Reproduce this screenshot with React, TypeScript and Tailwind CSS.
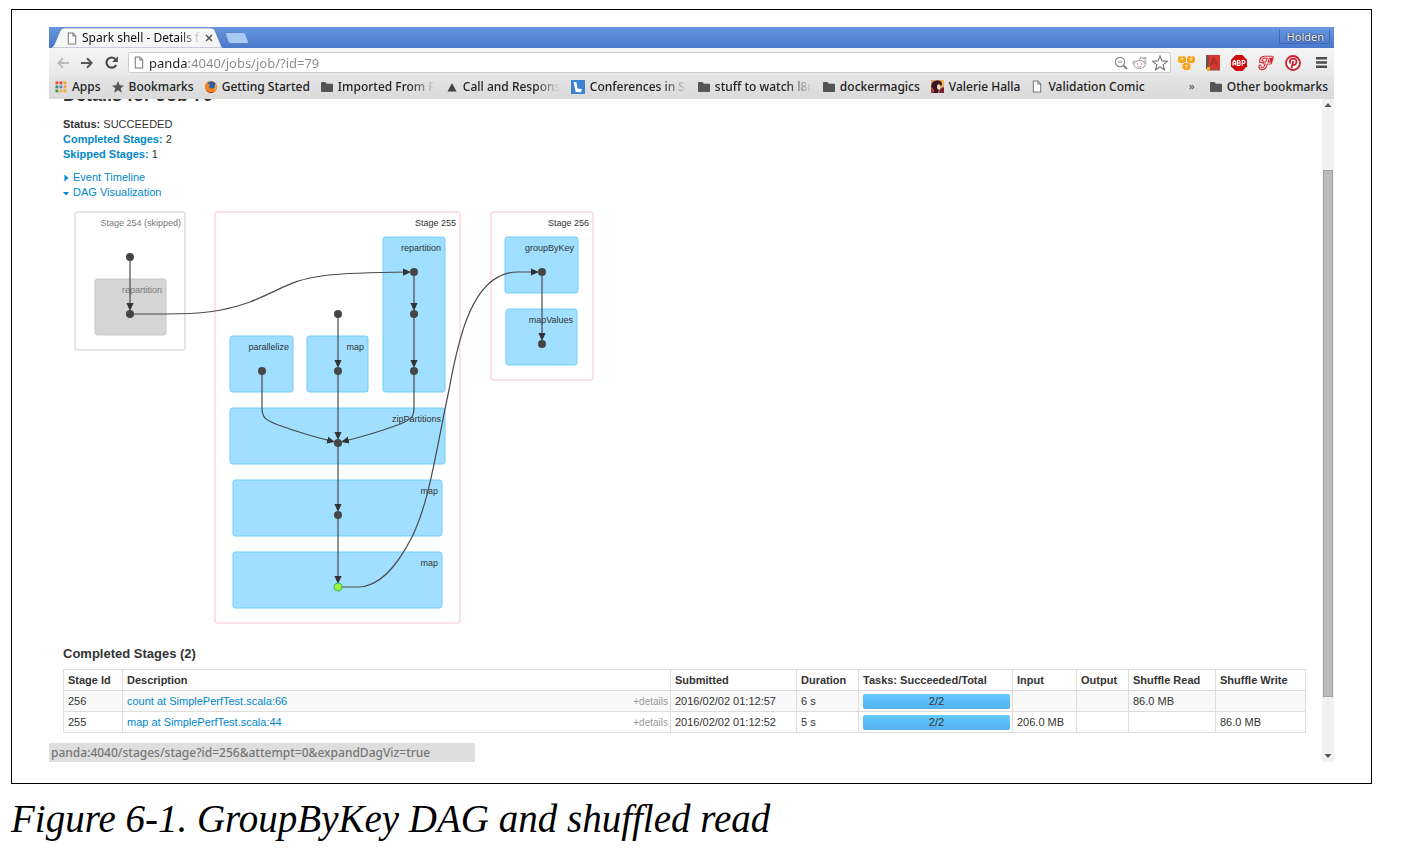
import type { ReactNode } from "react";

const UI = "font-['Noto_Sans',sans-serif]";

function PageIcon() {
  return (
    <svg viewBox="0 0 12 14" className="h-[13px] w-3 shrink-0" fill="#fff" stroke="#777" strokeWidth="1.1">
      <path d="M2 1h5l3 3.4V13H2z" />
      <path d="M7 1v3.4h3" fill="none" />
    </svg>
  );
}

function FolderIcon() {
  return (
    <svg viewBox="0 0 12 12" className="size-3 shrink-0" fill="#555">
      <path d="M0 1.8Q0 1 .8 1h3.600l1.400 1.800h5.400q.8 0 .8.8V10q0 .9-.8.9H.8Q0 10.900 0 10z" />
    </svg>
  );
}

function AppsIcon() {
  const colors = ["#e8452f", "#e8452f", "#f0a030", "#3c9a4e", "#4a86e8", "#f0a030", "#3c9a4e", "#f0b030", "#f0b030"];
  return (
    <svg viewBox="0 0 12 12" className="size-3 shrink-0">
      {colors.map((c, i) => (
        <rect key={i} x={(i % 3) * 4 + 0.5} y={Math.floor(i / 3) * 4 + 0.5} width="2.8" height="2.8" fill={c} />
      ))}
    </svg>
  );
}

function StarIcon() {
  return (
    <svg viewBox="0 0 12 12" className="size-3 shrink-0" fill="#555">
      <path d="M6 0l1.700 4.200 4.300.3-3.300 2.800 1.100 4.400L6 9.300l-3.800 2.400 1.100-4.400L0 4.500l4.300-.3z" />
    </svg>
  );
}

function FirefoxIcon() {
  return (
    <svg viewBox="0 0 12 12" className="size-3 shrink-0">
      <circle cx="6" cy="6" r="5.900" fill="#e0701c" />
      <circle cx="6.600" cy="4.600" r="4" fill="#2b5fa8" />
      <path d="M.3 4C1 2 2 1.600 2.600 1.700 2.400 3 4 3.200 5 3.500c.6.500-.8 1.300-1 2C4.500 8 7 8 8.500 7c1.600-1 2-3 1.500-5 2.500 2.500 2.600 6 0 8.400C7 12.800 2 12 .6 8.500.1 7 .1 5.500.3 4z" fill="#ee8424" />
      <path d="M9.800 2.200c1.900 2 2.100 5 .6 7-.2-1.500.6-4.500-.6-7z" fill="#f8c83c" />
      <path d="M1 8.500c2 2.800 6 3.300 8.500 1.700C7.500 13 2.500 12.500 1 8.500z" fill="#c0301c" />
    </svg>
  );
}

function TriangleIcon() {
  return (
    <svg viewBox="0 0 12 12" className="size-3 shrink-0" fill="#444">
      <path d="M6 2l4.500 8.500h-9z" />
    </svg>
  );
}

function LanyrdIcon() {
  return (
    <svg viewBox="0 0 14 14" className="size-[14px] shrink-0">
      <rect width="14" height="14" fill="#3b82d0" />
      <path d="M2.500 2l3 .3.900 6.200L11 9l-1 3.200-5.300-.3z" fill="#fff" />
    </svg>
  );
}

function PortraitIcon() {
  return (
    <svg viewBox="0 0 13 13" className="size-[13px] shrink-0">
      <rect width="13" height="13" fill="#d9a06a" />
      <path d="M1 3Q3 0 7 .5q4 .5 4 4L9.500 6 8 4 6.500 5 6 8l2 2-1 3H2L3 10 0 7z" fill="#3a1420" />
      <path d="M6.500 5L8 4l1.500 2L9 9l-2 .5-1-2z" fill="#f6d9c4" />
      <path d="M9 9l4-2v6H8z" fill="#7a2030" />
      <path d="M0 8l2.500 2L2 13H0z" fill="#a83a2c" />
      <path d="M11 0h2v5l-1.500 1z" fill="#f3c552" />
    </svg>
  );
}

function Bookmark({ icon, label, faded }: { icon: ReactNode; label: string; faded?: boolean }) {
  return (
    <a href="#" className="flex shrink-0 items-center gap-[5px]">
      {icon}
      <span
        className={
          faded
            ? "w-[97px] overflow-hidden whitespace-nowrap [mask-image:linear-gradient(to_right,#000_74%,transparent)]"
            : "whitespace-nowrap"
        }
      >
        {label}
      </span>
    </a>
  );
}

function TabStrip() {
  return (
    <div className="flex h-[21px] items-end justify-between bg-linear-to-b from-[#6797df] to-[#4a78cc]">
      <div className="flex items-end gap-px">
        <div className="relative flex h-[20px] w-[174px] items-center pr-[10px] pl-[17px]">
          <svg viewBox="0 0 174 20" preserveAspectRatio="none" className="absolute inset-0 size-full">
            <path d="M0 20Q4 20 5.500 16L11 3Q12.500 0 15 0H162Q165 0 166 2.500L171.500 16Q173 20 174 20z" fill="#f6f6f6" stroke="#35568f" strokeWidth=".5" />
          </svg>
          <div className="relative flex w-full items-center gap-1">
            <PageIcon />
            <span className="w-[119px] shrink-0 overflow-hidden text-xs leading-4 whitespace-nowrap text-[#111] [mask-image:linear-gradient(to_right,#000_82%,transparent)]">
              Spark shell - Details for Job 79
            </span>
            <button aria-label="Close tab" className="flex shrink-0 items-center">
              <svg viewBox="0 0 8 8" className="size-2" stroke="#555" strokeWidth="1.500">
                <path d="M1 1l6 6M7 1L1 7" />
              </svg>
            </button>
          </div>
        </div>
        <button aria-label="New tab" className="mb-[4px]">
          <svg viewBox="0 0 26 12" className="h-3 w-[26px]">
            <path d="M1 .5H19Q21 .5 21.800 2.500L25 11.500H7Q4.800 11.500 4 9.500z" fill="#a9c9f5" stroke="#4570b8" strokeWidth=".6" />
          </svg>
        </button>
      </div>
      <button className={`${UI} mr-1 mb-1 h-[15px] rounded-xs border border-[#3f68b0] border-t-[#6d98dc] pr-[5px] pl-[7px] text-[11px] leading-3 text-[#eee] text-shadow-[0_0_2px_#000]`}>
        Holden
      </button>
    </div>
  );
}

function Toolbar() {
  return (
    <div className="flex h-7 items-center bg-linear-to-b from-[#f5f5f5] to-[#e8e8e8] pt-px pr-[7px] pl-2">
      <div className="flex w-[71px] items-center gap-3">
        <button aria-label="Back">
          <svg viewBox="0 0 12 12" className="size-3" fill="none" stroke="#bbb" strokeWidth="1.800">
            <path d="M12 6H1.500M6 1.200L1.300 6 6 10.800" />
          </svg>
        </button>
        <button aria-label="Forward">
          <svg viewBox="0 0 12 12" className="size-3" fill="none" stroke="#555" strokeWidth="2">
            <path d="M0 6h10.500M6 1.200L10.700 6 6 10.800" />
          </svg>
        </button>
        <button aria-label="Reload">
          <svg viewBox="0 0 12 12" className="size-[13px]" fill="none" stroke="#4a4a4a" strokeWidth="2">
            <path d="M10.300 8.200A4.700 4.700 0 1 1 9.400 2.700" />
            <path d="M11.800.3v5.200H6.600z" fill="#4a4a4a" stroke="none" />
          </svg>
        </button>
      </div>
      <div className="flex h-[21px] flex-1 items-center gap-1 rounded-xs border border-[#ccc] bg-white pr-0.5 pl-1">
        <PageIcon />
        <input
          aria-label="Address"
          defaultValue="panda:4040/jobs/job/?id=79"
          className="min-w-0 flex-1 bg-[linear-gradient(to_right,#222_38px,#888_38px)] bg-clip-text text-[13px] leading-[18px] text-transparent outline-none"
        />
        <div className="flex items-center gap-1">
          <svg viewBox="0 0 14 14" className="size-[14px]" fill="none" stroke="#888" strokeWidth="1.200">
            <circle cx="6" cy="6" r="4.600" />
            <path d="M4 6h4" />
            <path d="M9.500 9.500l3.500 3.500" strokeWidth="2" />
          </svg>
          <svg viewBox="0 0 16 14" className="h-[14px] w-4" fill="#fff" stroke="#999" strokeWidth="1">
            <circle cx="2.300" cy="6.500" r="1.500" />
            <circle cx="12.700" cy="6.500" r="1.500" />
            <ellipse cx="7.500" cy="8.500" rx="5.700" ry="4" />
            <path d="M7.500 4.500l1-3 3.500.8" fill="none" />
            <circle cx="13" cy="2.300" r="1" />
            <circle cx="5.500" cy="8" r=".8" fill="#e8703c" stroke="none" />
            <circle cx="9.500" cy="8" r=".8" fill="#e8703c" stroke="none" />
            <path d="M5.500 10.500q2 1 4 0" fill="none" />
          </svg>
          <svg viewBox="0 0 16 16" className="size-4" fill="#fff" stroke="#777" strokeWidth="1.100">
            <path d="M8 1l2 4.900 5.300.4-4.100 3.400 1.300 5.100L8 12l-4.500 2.800 1.300-5.100L.7 6.300 6 5.900z" />
          </svg>
        </div>
      </div>
      <div className="flex items-center gap-[11px] pl-[7px]">
        <svg viewBox="0 0 17 16" className="h-4 w-[17px]" fill="#f9a11b">
          <path d="M0 2.500L2 1l2 .8L6 1l2 1.500v4L6 8 2 8 0 6.500zM9 2.500L11 1l2 .8L15 1l2 1.500v4L15 8h-4L9 6.500zM4.500 9.500L6.500 8h4l2 1.500v4l-2 1.500h-4l-2-1.500z" />
          <path d="M2.500 3.500h3M4 3.500V6M11.500 3.500h3M13 3.500V6M7 10.500h3M8.500 10.500V13" stroke="#fff0b8" strokeWidth=".9" />
        </svg>
        <svg viewBox="0 0 14 16" className="h-4 w-[14px]">
          <path d="M0 0h14v14H0z" fill="#d3392f" />
          <path d="M0 0h2.500v14H0z" fill="#5c5550" />
          <path d="M1 14h13v1.500H1z" fill="#9a4540" />
          <path d="M1 12h3v4l-1.500-1L1 16z" fill="#f2b01e" />
          <path d="M5 10l3-7 3 7M6 8h4" stroke="#a52a24" fill="none" strokeWidth="1.200" />
        </svg>
        <svg viewBox="0 0 16 16" className="size-4">
          <path d="M4.700 0h6.600L16 4.700v6.600L11.300 16H4.700L0 11.300V4.700z" fill="#cc0a0a" />
          <path d="M2 10.500V7l1.300-1.500L4.700 7v3.500M2 8.800h2.700M6.500 5.500v5h1.700q1 0 1-1.200T8.200 8q.9-.2.900-1.200T8.200 5.500zM6.500 8h1.700M11.300 10.800V5.500h1.500q1.200 0 1.200 1.500t-1.200 1.500h-1.500" stroke="#fff" strokeWidth="1.200" fill="none" />
        </svg>
        <svg viewBox="0 0 16 16" className="size-4" fill="none" strokeLinecap="round" strokeLinejoin="round">
          <path d="M14.300 2.200H6.500Q2.500 2.500 2.500 6.500H4M10.500 2.500L7.500 11Q6.500 14 3.500 13.700 1.500 13.300 2 11M6 8h6.500L14 3" stroke="#d3242f" strokeWidth="3" />
          <path d="M14.300 2.200H6.500Q2.500 2.500 2.500 6.500H4M10.500 2.500L7.500 11Q6.500 14 3.500 13.700 1.500 13.300 2 11M6 8h6.500" stroke="#fff" strokeWidth="1" />
        </svg>
        <svg viewBox="0 0 16 16" className="size-4" fill="none" stroke="#c8202c">
          <circle cx="8" cy="8" r="7" fill="#fff" strokeWidth="1.800" />
          <path d="M5.200 8.500Q3.800 4 8 3.700q4 .1 3.400 3.500Q10.600 10.500 8 9.600M8.300 6L6.500 13" strokeWidth="1.800" />
        </svg>
        <button aria-label="Menu" className="ml-1">
          <svg viewBox="0 0 11 11" className="size-[11px]" fill="#4c4c4c">
            <path d="M0 0h11v2.400H0zM0 4.300h11v2.400H0zM0 8.600h11V11H0z" />
          </svg>
        </button>
      </div>
    </div>
  );
}

function BookmarksBar() {
  return (
    <div className="flex h-[23px] items-center justify-between bg-linear-to-b from-[#e4e4e4] to-[#dadada] pr-1.5 pb-0.5 pl-1.5 text-xs font-medium text-[#222]">
      <div className="flex items-center gap-[11px]">
        <Bookmark icon={<AppsIcon />} label="Apps" />
        <Bookmark icon={<StarIcon />} label="Bookmarks" />
        <Bookmark icon={<FirefoxIcon />} label="Getting Started" />
        <Bookmark icon={<FolderIcon />} label="Imported From Firefox" faded />
        <Bookmark icon={<TriangleIcon />} label="Call and Response" faded />
        <Bookmark icon={<LanyrdIcon />} label="Conferences in San Francisco" faded />
        <Bookmark icon={<FolderIcon />} label="stuff to watch l8r" faded />
        <Bookmark icon={<FolderIcon />} label="dockermagics" />
        <Bookmark icon={<PortraitIcon />} label="Valerie Halla" />
        <Bookmark icon={<PageIcon />} label="Validation Comic" />
      </div>
      <div className="flex items-center gap-[15px]">
        <button aria-label="More bookmarks" className="text-[11px] text-[#555]">»</button>
        <Bookmark icon={<FolderIcon />} label="Other bookmarks" />
      </div>
    </div>
  );
}

type Box = { x: number; y: number; w: number; h: number; label: string; skipped?: boolean };

const stages: Box[] = [
  { x: 75, y: 212, w: 110, h: 138, label: "Stage 254 (skipped)", skipped: true },
  { x: 215, y: 212, w: 245, h: 411, label: "Stage 255" },
  { x: 491, y: 212, w: 102, h: 168, label: "Stage 256" },
];

const scopes: Box[] = [
  { x: 95, y: 279, w: 71, h: 56, label: "repartition", skipped: true },
  { x: 383, y: 237, w: 62, h: 155, label: "repartition" },
  { x: 230, y: 336, w: 63, h: 56, label: "parallelize" },
  { x: 307, y: 336, w: 61, h: 56, label: "map" },
  { x: 230, y: 408, w: 215, h: 56, label: "zipPartitions" },
  { x: 233, y: 480, w: 209, h: 56, label: "map" },
  { x: 233, y: 552, w: 209, h: 56, label: "map" },
  { x: 505, y: 237, w: 73, h: 56, label: "groupByKey" },
  { x: 506, y: 309, w: 71, h: 56, label: "mapValues" },
];

const nodes = [
  [130, 257], [130, 314], [414, 272], [414, 314], [414, 371], [338, 314], [338, 371],
  [262, 371], [338, 443], [338, 515], [542, 272], [542, 344],
];

const edges = [
  "M130 257V309",
  "M414 272V309",
  "M414 314V366",
  "M338 314V366",
  "M338 371V438",
  "M338 443V510",
  "M338 515V582",
  "M542 272V339",
  "M130 314H165C200 314 222 312 250 302C285 288 290 280 325 275.500C350 272.500 375 272.300 409 272",
  "M338 587H358C378 587 395 570 412 537C430 500 436 450 449 390C458 340 472 272 518 272H537",
  "M262 371V408C262 418 266 420 277 424.500C292 430 310 436 333 441.500",
  "M414 371V408C414 418 410 420 399 424.500C384 430 366 436 343 441.500",
];

function Dag() {
  return (
    <svg
      viewBox="63 200 545 437"
      className="block h-[437px] w-[545px] font-['Liberation_Sans',sans-serif] text-[9px]"
      role="img"
      aria-label="DAG Visualization"
    >
      <defs>
        <marker id="arrow" viewBox="0 0 8 8" refX="6" refY="4" markerWidth="8" markerHeight="8" markerUnits="userSpaceOnUse" orient="auto">
          <path d="M0 .4L8 4 0 7.600z" fill="#333" />
        </marker>
      </defs>
      {stages.map((s) => (
        <g key={s.label}>
          <rect x={s.x} y={s.y} width={s.w} height={s.h} rx="3" fill="#fff" stroke={s.skipped ? "#dddddd" : "#ffd6de"} strokeWidth="1.500" />
          <text x={s.x + s.w - 4} y={s.y + 14} textAnchor="end" fill={s.skipped ? "#777" : "#333"}>{s.label}</text>
        </g>
      ))}
      {scopes.map((s, i) => (
        <g key={i}>
          <rect x={s.x} y={s.y} width={s.w} height={s.h} rx="2.500" fill={s.skipped ? "#d5d5d5" : "#a0dfff"} stroke={s.skipped ? "#c8c8c8" : "#72cdfb"} />
          <text x={s.x + s.w - 4} y={s.y + 14} textAnchor="end" fill={s.skipped ? "#777" : "#333"}>{s.label}</text>
        </g>
      ))}
      {edges.map((d) => (
        <path key={d} d={d} fill="none" stroke="#4a4a4a" strokeWidth="1.200" markerEnd="url(#arrow)" />
      ))}
      {nodes.map(([x, y], i) => (
        <circle key={i} cx={x} cy={y} r="4" fill="#444" />
      ))}
      <circle cx="338" cy="587" r="4" fill="#a0f43c" stroke="#3fb55e" />
    </svg>
  );
}

const columns = [
  { name: "Stage Id", width: "w-[59px]" },
  { name: "Description", width: "" },
  { name: "Submitted", width: "w-[126px]" },
  { name: "Duration", width: "w-[62px]" },
  { name: "Tasks: Succeeded/Total", width: "w-[154px]" },
  { name: "Input", width: "w-16" },
  { name: "Output", width: "w-[52px]" },
  { name: "Shuffle Read", width: "w-[87px]" },
  { name: "Shuffle Write", width: "w-[90px]" },
];

const rows = [
  { id: "256", desc: "count at SimplePerfTest.scala:66", at: "2016/02/02 01:12:57", dur: "6 s", input: "", read: "86.0 MB", write: "" },
  { id: "255", desc: "map at SimplePerfTest.scala:44", at: "2016/02/02 01:12:52", dur: "5 s", input: "206.0 MB", read: "", write: "86.0 MB" },
];

const CELL = "h-[21px] border border-[#ddd] px-1 py-0 whitespace-nowrap";

function StageTable() {
  return (
    <table className="w-full table-fixed border-collapse text-left leading-[15px]">
      <thead>
        <tr>
          {columns.map((c) => (
            <th key={c.name} className={`${CELL} ${c.width} font-bold`}>{c.name}</th>
          ))}
        </tr>
      </thead>
      <tbody>
        {rows.map((r) => (
          <tr key={r.id} className="odd:bg-[#f9f9f9]">
            <td className={CELL}>{r.id}</td>
            <td className={CELL}>
              <div className="flex justify-between">
                <a href="#" className="text-[#0088cc]">{r.desc}</a>
                <button className="-mr-0.5 text-[10px] text-[#999]">+details</button>
              </div>
            </td>
            <td className={CELL}>{r.at}</td>
            <td className={CELL}>{r.dur}</td>
            <td className={CELL}>
              <div className="-mr-0.5 h-[15px] rounded-xs bg-linear-to-b from-[#64cbff] to-[#54b0ee] text-center">2/2</div>
            </td>
            <td className={CELL}>{r.input}</td>
            <td className={CELL}></td>
            <td className={CELL}>{r.read}</td>
            <td className={CELL}>{r.write}</td>
          </tr>
        ))}
      </tbody>
    </table>
  );
}

function Scrollbar() {
  return (
    <div className="flex w-3 shrink-0 flex-col items-center bg-[#f1f1f1]">
      <svg viewBox="0 0 12 12" className="size-3" fill="#555"><path d="M6 4l3.500 4h-7z" /></svg>
      <div className="grow-[59]" />
      <div className="w-2.5 grow-[526] border border-[#a4a4a4] bg-[#bcbcbc]" />
      <div className="grow-[53]" />
      <svg viewBox="0 0 12 12" className="size-3" fill="#555"><path d="M6 8l3.500-4h-7z" /></svg>
    </div>
  );
}

export default function App() {
  return (
    <main className="min-h-screen bg-white pt-[9px] pr-9 pl-[11px]">
      <figure>
        <div className="border border-black px-[37px] pt-[17px] pb-[21px]">
          <div className={UI}>
            <TabStrip />
            <Toolbar />
            <BookmarksBar />
          </div>
          <div className="relative flex overflow-hidden bg-white">
            <div className="min-w-0 flex-1 pr-4 pb-[29px] pl-[14px] font-['Liberation_Sans',sans-serif] text-[11px] leading-[15px] text-[#333]">
              <h1 className="-mt-[13px] mb-[13px] text-lg leading-[18px] font-bold">Details for Job 79</h1>
              <ul>
                <li><b>Status:</b> SUCCEEDED</li>
                <li><a href="#" className="font-bold text-[#0088cc]">Completed Stages:</a> 2</li>
                <li><a href="#" className="font-bold text-[#0088cc]">Skipped Stages:</a> 1</li>
              </ul>
              <div className="mt-2 flex flex-col items-start text-[#0088cc]">
                <button className="flex items-center gap-1">
                  <svg viewBox="0 0 6 8" className="h-2 w-1.5" fill="#0088cc"><path d="M1.500.5L5.500 4l-4 3.500z" /></svg>
                  Event Timeline
                </button>
                <button className="flex items-center gap-1">
                  <svg viewBox="0 0 6 8" className="h-2 w-1.5" fill="#0088cc"><path d="M0 3h6L3 6.500z" /></svg>
                  DAG Visualization
                </button>
              </div>
              <Dag />
              <h2 className="mt-2 mb-1.5 text-[13px] leading-[18px] font-bold">Completed Stages (2)</h2>
              <StageTable />
            </div>
            <Scrollbar />
            <div className={`${UI} absolute bottom-0 left-0 w-[426px] rounded-tr-xs bg-[#dedede] px-0.5 text-xs leading-[19px] font-medium text-[#777]`}>
              panda:4040/stages/stage?id=256&amp;attempt=0&amp;expandDagViz=true
            </div>
          </div>
        </div>
        <figcaption className="mt-3 font-['Liberation_Serif',serif] text-[39px] leading-[46px] text-black italic">
          Figure 6-1. GroupByKey DAG and shuffled read
        </figcaption>
      </figure>
    </main>
  );
}
